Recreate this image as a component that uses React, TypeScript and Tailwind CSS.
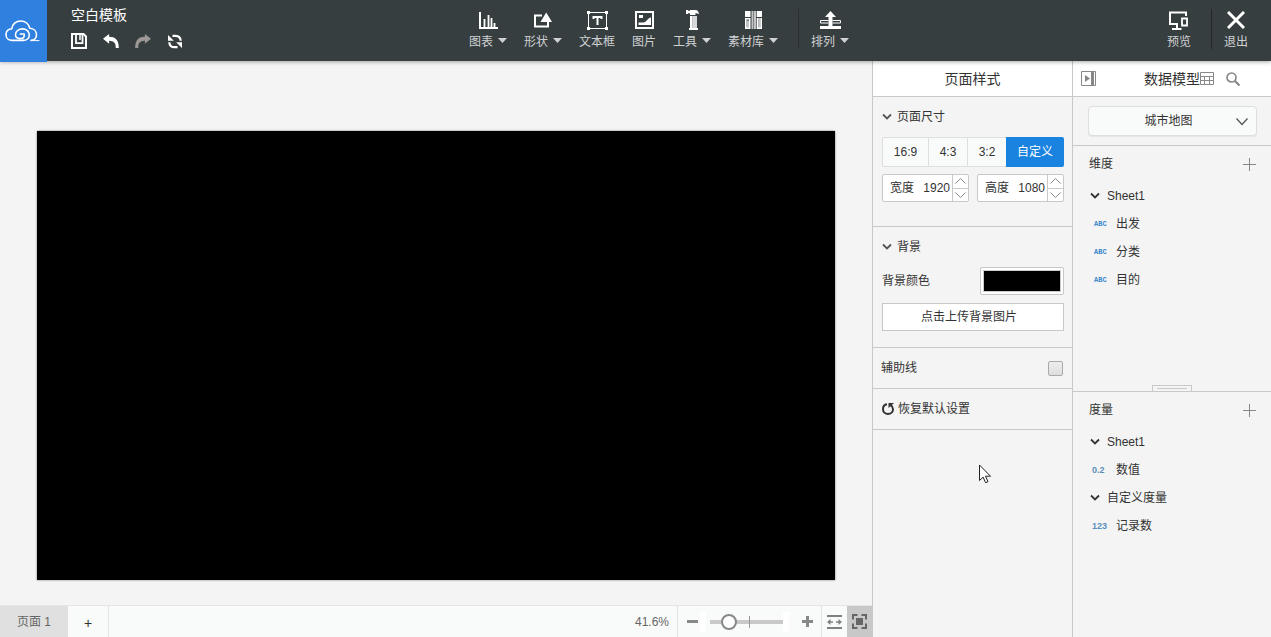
import { useState, type ReactNode } from "react";

function Caret() {
  return (
    <svg width="9" height="9" viewBox="0 0 9 9" fill="currentColor" aria-hidden="true">
      <path d="M0 0h9L4.500 5z" />
    </svg>
  );
}

function Chevron({ className = "" }: { className?: string }) {
  return (
    <svg width="10" height="8" viewBox="0 0 10 8" fill="none" stroke="currentColor" strokeWidth="1.8" className={className} aria-hidden="true">
      <path d="M1 1.5 5 5.5 9 1.5" />
    </svg>
  );
}

function ToolButton({ label, menu = false, children }: { label: string; menu?: boolean; children: ReactNode }) {
  return (
    <button type="button" className="flex flex-col items-center gap-1 text-white">
      <span className="flex h-5 items-center">{children}</span>
      <span className="flex items-center gap-[5px] text-xs leading-4 text-[#cfd1d2]">
        {label}
        {menu && <Caret />}
      </span>
    </button>
  );
}

function CloudLogo() {
  return (
    <svg width="35" height="22" viewBox="0 0 35 22" fill="none" stroke="#fff" strokeWidth="1.6" strokeLinecap="round" strokeLinejoin="round" aria-hidden="true">
      <path d="M18 20.400H7.200C3.600 20.400 1 18 1 14.700c0-3.200 2.300-5.500 5.700-5.900C7.300 4.300 10.900 1 15.700 1c4.600 0 8.200 3 9.100 7.300 4 .3 6.700 3 6.700 6.400 0 3-2.200 5.300-5.400 5.700" />
      <path d="M26 20.600h8" strokeWidth="1" />
      <path d="M18 20.400c3.700 0 6.300-2.300 6.300-5.500 0-3.500-2.900-6-6.800-6-4 0-7 2.400-7 5.700 0 2.400 1.800 4 4.500 4 2.400 0 4.200-1.300 4.200-3.100V14h-4" />
    </svg>
  );
}

function HeaderBar() {
  return (
    <header className="relative z-10 flex h-[61px] shrink-0 bg-[#373e40] shadow-[0_1px_4px_rgba(0,0,0,0.35)]">
      <a href="#home" aria-label="首页" className="flex h-[62px] w-[47px] shrink-0 items-center justify-center bg-[#2f80df] pr-0.5">
        <CloudLogo />
      </a>
      <div className="flex w-[422px] shrink-0 flex-col pt-[5px] pl-6">
        <h1 className="text-sm leading-5 text-white">空白模板</h1>
        <div className="mt-2 flex items-center gap-4 text-white">
          <button type="button" aria-label="保存">
            <svg width="16" height="16" viewBox="0 0 16 16" fill="none" stroke="currentColor" aria-hidden="true">
              <path d="M1 1h11.500L15 3.500V15H1z" strokeWidth="2" />
              <path d="M5 1v9.200h6.500V1" strokeWidth="1.800" />
              <path d="M9 2v5" strokeWidth="1.500" />
            </svg>
          </button>
          <button type="button" aria-label="撤销">
            <svg width="16" height="16" viewBox="0 0 17 16" fill="currentColor" aria-hidden="true">
              <path d="M0 5.500 6.500.5v3C12.500 3.500 17 6.500 16.800 15.500H13.500C13.800 10.500 12 8 6.500 7.800v3z" />
            </svg>
          </button>
          <button type="button" aria-label="重做" className="text-[#9c9896]">
            <svg width="16" height="16" viewBox="0 0 17 16" fill="currentColor" aria-hidden="true">
              <path d="M17 5.500 10.500.5v3C4.500 3.500 0 6.500.2 15.500h3.300C3.200 10.500 5 8 10.500 7.800v3z" />
            </svg>
          </button>
          <button type="button" aria-label="刷新">
            <svg width="16" height="15" viewBox="0 0 16 15" fill="none" stroke="currentColor" strokeWidth="2.200" aria-hidden="true">
              <path d="M5.500 1.800H8.500c3.200 0 5 1.900 5.200 5" />
              <path d="M10.500 13.200h-3c-3.200 0-5-1.900-5.200-5" />
              <path d="M1 1v5.800h5.800zM15 14V8.200H9.200z" fill="currentColor" stroke="none" />
            </svg>
          </button>
        </div>
      </div>

      <nav aria-label="组件" className="flex items-start gap-[17px] pt-[10px]">
        <ToolButton label="图表" menu>
          <svg width="19" height="17" viewBox="0 0 19 17" fill="none" stroke="currentColor" strokeWidth="2" aria-hidden="true">
            <path d="M1 0v16H19" />
            <path d="M5.500 16V7M9.500 16V3M12.500 16V6M15.500 16v-5" strokeWidth="1.800" />
          </svg>
        </ToolButton>
        <ToolButton label="形状" menu>
          <svg width="18" height="16" viewBox="0 0 18 16" fill="none" stroke="currentColor" strokeWidth="2" aria-hidden="true">
            <path d="M8 3.500H1V14.500h13V9" />
            <path d="M12.200.500 18 10H6.500z" fill="currentColor" stroke="none" />
          </svg>
        </ToolButton>
        <ToolButton label="文本框">
          <svg width="21" height="19" viewBox="0 0 21 19" fill="none" stroke="currentColor" aria-hidden="true">
            <path d="M1.500 1.500h18v16h-18z" strokeWidth="1" />
            <path d="M0 0h3v3H0zM18 0h3v3h-3zM0 16h3v3H0zM18 16h3v3h-3z" fill="currentColor" stroke="none" />
            <path d="M6.500 8V6h8v2M10.500 6v8" strokeWidth="2" />
          </svg>
        </ToolButton>
        <ToolButton label="图片">
          <svg width="19" height="18" viewBox="0 0 19 18" fill="currentColor" aria-hidden="true">
            <path d="M0 0h19v18H0zM2 2v14h15V2z" fillRule="evenodd" />
            <path d="M4 4h4v3H4zM3.500 14v-2.500h5c3 0 4-4.500 7.500-5V14z" />
          </svg>
        </ToolButton>
        <ToolButton label="工具" menu>
          <svg width="13" height="20" viewBox="0 0 13 20" fill="currentColor" aria-hidden="true">
            <path d="M0 0h2v.8h2V0h5.500c2 0 3 1.500 3.500 4L9.500 3v2H4V3.200H2V4H0z" />
            <path d="M4 6h2.500v12H4zM3 18h9v2H3z" />
            <path d="M6.500 6H11v12H6.500z" opacity=".8" />
          </svg>
        </ToolButton>
        <ToolButton label="素材库" menu>
          <svg width="17" height="18" viewBox="0 0 17 18" fill="currentColor" aria-hidden="true">
            <path d="M0 0h5.500v6H0zM0 7h5.500v11H0zM1.500 8.500v8H4v-8z" fillRule="evenodd" />
            <path d="M1.500 9.500H4v8H1.500zM6.500 0H8.500v18h-2zM9 0h2v18H9zM13.200 7h2.500v10h-2.500z" opacity=".7" />
            <path d="M11.700 0H17v6h-5.300zM11.700 7H17v11h-5.300zM13.200 7v9.500h2.300V7z" fillRule="evenodd" />
          </svg>
        </ToolButton>
      </nav>
      <div className="mt-[9px] ml-5 h-10 w-px bg-[#2a2f30]" />
      <div className="ml-3 pt-[10px]">
        <ToolButton label="排列" menu>
          <svg width="21" height="18" viewBox="0 0 21 18" fill="currentColor" aria-hidden="true">
            <path d="M10.500 0 16 6h-3.500v9H21v3H0v-3h8.500V6H5z" />
            <path d="M8.500 9.500H.5v2.500h8M12.500 9.500h8v2.500h-8" fill="none" stroke="currentColor" />
          </svg>
        </ToolButton>
      </div>

      <div className="ml-auto flex items-start pt-[10px] pr-[23px]">
        <ToolButton label="预览">
          <svg width="19" height="19" viewBox="0 0 19 19" fill="none" stroke="currentColor" strokeWidth="2" aria-hidden="true">
            <path d="M17 5V1.500H1V13h8M8 13v5M3 18h9.500" />
            <path d="M13 7.500h5v7h-5z" strokeWidth="1.800" />
          </svg>
        </ToolButton>
        <div className="-mt-px ml-5 h-10 w-px bg-[#232829]" />
        <div className="ml-3">
          <ToolButton label="退出">
            <svg width="18" height="18" viewBox="0 0 18 18" fill="none" stroke="currentColor" strokeWidth="3" aria-hidden="true">
              <path d="M1 1l16 16M17 1 1 17" />
            </svg>
          </ToolButton>
        </div>
      </div>
    </header>
  );
}

function BottomBar() {
  const [zoom, setZoom] = useState(20);
  return (
    <footer className="flex h-8 shrink-0 items-stretch border-t border-[#e6e6e6] bg-[#f9fbfa] text-xs text-[#666]">
      <button type="button" className="w-[68px] bg-[#e0e0e0]">页面 1</button>
      <button type="button" aria-label="添加页面" className="w-[41px] border-r border-[#e3e3e3] pt-0.5 text-sm text-[#333]">+</button>
      <output className="ml-auto flex items-center border-r border-[#e3e3e3] pr-2 leading-4">41.6%</output>
      <button type="button" aria-label="缩小" className="pr-3 pl-[9px] text-[#888]">
        <svg width="11" height="11" viewBox="0 0 11 11" stroke="currentColor" strokeWidth="3" aria-hidden="true">
          <path d="M0 5.500h11" />
        </svg>
      </button>
      <div className="relative flex items-center">
        <input
          type="range"
          aria-label="缩放"
          min={0}
          max={100}
          value={zoom}
          onChange={(e) => setZoom(Number(e.target.value))}
          className="relative z-10 h-4 w-[73px] appearance-none bg-transparent [&::-webkit-slider-runnable-track]:h-1 [&::-webkit-slider-runnable-track]:bg-[#c9c9c9] [&::-webkit-slider-thumb]:-mt-[6px] [&::-webkit-slider-thumb]:h-4 [&::-webkit-slider-thumb]:w-4 [&::-webkit-slider-thumb]:appearance-none [&::-webkit-slider-thumb]:rounded-full [&::-webkit-slider-thumb]:border-2 [&::-webkit-slider-thumb]:border-[#888] [&::-webkit-slider-thumb]:bg-white"
        />
        <span className="absolute left-[39px] z-20 h-3 w-px bg-[#999]" />
        <span className="absolute -left-[10px] h-5 w-[6px] bg-white" />
        <span className="absolute -right-[6px] h-5 w-[6px] bg-white" />
      </div>
      <button type="button" aria-label="放大" className="border-r border-[#e3e3e3] pr-2 pl-[19px] text-[#888]">
        <svg width="11" height="11" viewBox="0 0 11 11" stroke="currentColor" strokeWidth="3" aria-hidden="true">
          <path d="M0 5.500h11M5.500 0v11" />
        </svg>
      </button>
      <button type="button" aria-label="适应宽度" className="flex w-[25px] items-center justify-center text-[#808080]">
        <svg width="15" height="14" viewBox="0 0 15 14" fill="none" stroke="currentColor" aria-hidden="true">
          <path d="M0 1h15M0 13h15" strokeWidth="2" />
          <path d="M2 7h4M9 7h4" strokeWidth="1.500" />
          <path d="M0 7l3.500-3v6zM15 7l-3.500-3v6z" fill="currentColor" stroke="none" />
        </svg>
      </button>
      <button type="button" aria-label="适应页面" className="flex w-[25px] items-center justify-center bg-[#c8c8c8] text-[#666]">
        <svg width="15" height="15" viewBox="0 0 15 15" fill="none" stroke="currentColor" strokeWidth="2" aria-hidden="true">
          <path d="M1 5.500V1h4.500M9.500 1H14v4.500M14 9.500V14H9.500M5.500 14H1V9.500" />
          <path d="M5 5h5v5H5z" fill="currentColor" />
        </svg>
      </button>
    </footer>
  );
}

function SizeField({ id, label, initial }: { id: string; label: string; initial: number }) {
  const [value, setValue] = useState(initial);
  return (
    <div className="flex h-7 w-[87px] rounded-xs border border-[#c8c8c8] bg-white text-xs">
      <label htmlFor={id} className="flex shrink-0 items-center pl-[7px]">{label}</label>
      <input
        id={id}
        inputMode="numeric"
        value={value}
        onChange={(e) => setValue(Number(e.target.value) || 0)}
        className="w-full min-w-0 flex-1 bg-transparent pr-0.5 text-right outline-none"
      />
      <div className="flex w-4 shrink-0 flex-col border-l border-[#c8c8c8] text-[#888]">
        <button type="button" aria-label={`增加${label}`} onClick={() => setValue(value + 1)} className="flex flex-1 items-center justify-center border-b border-[#c8c8c8]">
          <svg width="11" height="6" viewBox="0 0 11 6" fill="none" stroke="currentColor" aria-hidden="true"><path d="M.5 5.500l5-5 5 5" /></svg>
        </button>
        <button type="button" aria-label={`减少${label}`} onClick={() => setValue(value - 1)} className="flex flex-1 items-center justify-center">
          <svg width="11" height="6" viewBox="0 0 11 6" fill="none" stroke="currentColor" aria-hidden="true"><path d="M.5.500l5 5 5-5" /></svg>
        </button>
      </div>
    </div>
  );
}

function SectionTitle({ children }: { children: ReactNode }) {
  return (
    <h3 className="flex h-10 items-center">
      <button type="button" aria-expanded="true" className="flex items-center gap-[5px]">
        <Chevron className="text-[#555]" />
        {children}
      </button>
    </h3>
  );
}

const ratios = [
  { label: "16:9", style: "w-[45px]" },
  { label: "4:3", style: "w-[39px] border-l border-[#dedede]" },
  { label: "3:2", style: "w-[39px] border-l border-[#dedede]" },
];

function StylePanel() {
  return (
    <aside className="relative w-[200px] shrink-0 border-l border-[#c8c8c8] text-xs">
      <h2 className="flex h-9 items-center justify-center border-b border-[#c8c8c8] bg-white text-sm">页面样式</h2>
      <section className="border-b border-[#c8c8c8] pr-2 pb-6 pl-[9px]">
        <SectionTitle>页面尺寸</SectionTitle>
        <div className="flex h-[30px]">
          <div className="flex rounded-l-xs border border-r-0 border-[#dedede] bg-[#f9fbfa]">
            {ratios.map((r) => (
              <button key={r.label} type="button" className={r.style}>{r.label}</button>
            ))}
          </div>
          <button type="button" className="flex-1 rounded-r-xs bg-[#1a82df] text-white">自定义</button>
        </div>
        <div className="mt-[7px] flex justify-between">
          <SizeField id="page-width" label="宽度" initial={1920} />
          <SizeField id="page-height" label="高度" initial={1080} />
        </div>
      </section>
      <section className="border-b border-[#c8c8c8] pr-2 pb-4 pl-[9px]">
        <SectionTitle>背景</SectionTitle>
        <div className="flex h-7 items-center justify-between">
          <span>背景颜色</span>
          <button type="button" aria-label="背景颜色" className="h-7 w-[84px] rounded-xs border border-[#c8c8c8] bg-white p-0.5">
            <span className="block h-full border border-[#ccc] bg-black" />
          </button>
        </div>
        <button type="button" className="mt-2 h-7 w-full border border-[#c8c8c8] bg-white pr-2">点击上传背景图片</button>
      </section>
      <div className="flex h-[41px] items-center justify-between border-b border-[#c8c8c8] pr-[9px] pl-2">
        <label htmlFor="guides">辅助线</label>
        <input id="guides" type="checkbox" className="h-[15px] w-[15px] appearance-none rounded-xs border border-[#aaa] bg-linear-to-b from-[#eee] to-[#ddd] checked:bg-[#1a82df]" />
      </div>
      <div className="flex h-[41px] items-center border-b border-[#c8c8c8] px-[9px]">
        <button type="button" className="flex items-center gap-1">
          <svg width="12" height="12" viewBox="0 0 12 12" fill="none" stroke="#333" strokeWidth="2" aria-hidden="true">
            <path d="M5 1.300C2.700 1.600 1 3.700 1 6.200 1 8.900 3.200 11 6 11s5-2.100 5-4.800c0-1.700-.9-3.200-2.300-4.100" />
            <path d="M6.500 0H12L6.500 5z" fill="#333" stroke="none" />
          </svg>
          恢复默认设置
        </button>
      </div>
      <svg width="13" height="20" viewBox="0 0 13 20" className="absolute top-[403px] left-[106px]" aria-hidden="true">
        <path d="M.5 1v15.500l3.600-3.400 2.500 5.600 2.400-1-2.500-5.500h5z" fill="#fff" stroke="#222" />
      </svg>
    </aside>
  );
}

function Group({ children }: { children: ReactNode }) {
  return (
    <li>
      <button type="button" aria-expanded="true" className="flex h-7 w-full items-center gap-[7px] pl-[17px]">
        <Chevron />
        {children}
      </button>
    </li>
  );
}

function Field({ type, children }: { type: "ABC" | "0.2" | "123"; children: ReactNode }) {
  return (
    <li className="flex h-7 items-center pl-[18px]">
      {type === "ABC" ? (
        <span className="w-[25px] pl-[3px] font-['Liberation_Mono',monospace] text-[7px] leading-4 font-bold text-[#3a86cc]">{type}</span>
      ) : (
        <span className="w-[25px] pl-px text-[9px] leading-4 font-bold text-[#5a8fc0]">{type}</span>
      )}
      {children}
    </li>
  );
}

function ModelSection({ title, children }: { title: string; children: ReactNode }) {
  return (
    <section className="flex-1">
      <div className="flex h-9 items-center justify-between pr-[15px] pl-4">
        <h3>{title}</h3>
        <button type="button" aria-label={`添加${title}`} className="text-[#888]">
          <svg width="13" height="13" viewBox="0 0 13 13" stroke="currentColor" aria-hidden="true"><path d="M0 6.500h13M6.500 0v13" /></svg>
        </button>
      </div>
      <ul>{children}</ul>
    </section>
  );
}

function ModelPanel() {
  return (
    <aside className="flex w-[199px] shrink-0 flex-col border-l border-[#c8c8c8] text-xs">
      <div className="flex h-9 items-center border-b border-[#c8c8c8] bg-white px-2 text-[#888]">
        <button type="button" aria-label="收起面板">
          <svg width="15" height="15" viewBox="0 0 15 15" fill="none" stroke="currentColor" aria-hidden="true">
            <path d="M.5.500h14v14H.5z" />
            <path d="M4 4l5 3.500L4 11z" fill="currentColor" stroke="none" />
            <path d="M11.500 1v13" strokeWidth="3" />
          </svg>
        </button>
        <h2 className="ml-12 text-sm text-[#333]">数据模型</h2>
        <button type="button" aria-label="数据表">
          <svg width="14" height="13" viewBox="0 0 14 13" fill="none" stroke="currentColor" aria-hidden="true">
            <path d="M.5.500h13v12H.5zM.5 4.500h13M.5 8.500h13M4.500 4.500v8M9.500 4.500v8" />
          </svg>
        </button>
        <button type="button" aria-label="搜索" className="ml-3">
          <svg width="14" height="14" viewBox="0 0 14 14" fill="none" stroke="currentColor" aria-hidden="true">
            <circle cx="5.500" cy="5.500" r="4.500" strokeWidth="1.700" />
            <path d="M9 9l4.500 4.500" strokeWidth="2.200" />
          </svg>
        </button>
      </div>
      <div className="border-b border-[#c8c8c8] py-[9px] pr-[14px] pl-[15px]">
        <div className="relative">
          <select aria-label="数据模型" className="block h-[30px] w-full appearance-none rounded-sm border border-[#dedede] bg-[#f9fbfa] pr-2 text-center shadow-[0_1px_1px_rgba(0,0,0,0.06)] [text-align-last:center]">
            <option>城市地图</option>
          </select>
          <svg width="12" height="8" viewBox="0 0 12 8" fill="none" stroke="#555" strokeWidth="1.300" className="pointer-events-none absolute top-3 right-[9px]" aria-hidden="true">
            <path d="M.5.500 6 6.500 11.500.5" />
          </svg>
        </div>
      </div>
      <ModelSection title="维度">
        <Group>Sheet1</Group>
        <Field type="ABC">出发</Field>
        <Field type="ABC">分类</Field>
        <Field type="ABC">目的</Field>
      </ModelSection>
      <div className="flex justify-center border-b border-[#c8c8c8]">
        <div className="-mt-[6px] h-[6px] w-10 border border-b-0 border-[#c8c8c8] px-1 pt-0.5">
          <div className="h-px bg-[#c8c8c8]" />
        </div>
      </div>
      <ModelSection title="度量">
        <Group>Sheet1</Group>
        <Field type="0.2">数值</Field>
        <Group>自定义度量</Group>
        <Field type="123">记录数</Field>
      </ModelSection>
    </aside>
  );
}

export default function App() {
  return (
    <div className="flex h-screen flex-col bg-[#f4f4f4] font-['Liberation_Sans','Noto_Sans_CJK_SC',sans-serif] text-[#333]">
      <HeaderBar />
      <div className="flex min-h-0 flex-1">
        <main className="flex min-w-0 flex-1 flex-col">
          <div className="min-h-0 flex-1 overflow-hidden px-[37px] pt-[70px]">
            <div className="aspect-video w-full bg-black shadow-[0_0_2px_rgba(0,0,0,0.5)]" />
          </div>
          <BottomBar />
        </main>
        <StylePanel />
        <ModelPanel />
      </div>
    </div>
  );
}
